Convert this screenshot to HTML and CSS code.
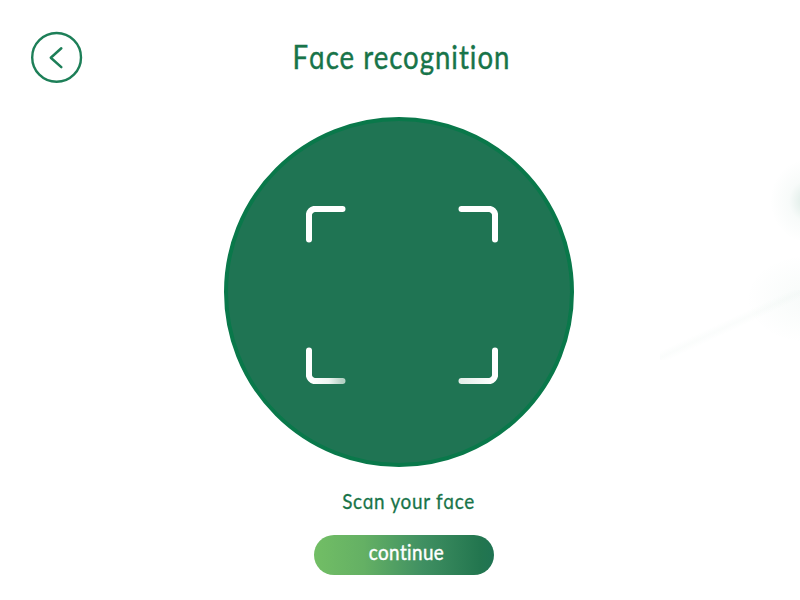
FILE: index.html
```html
<!DOCTYPE html>
<html lang="en">
<head>
<meta charset="utf-8">
<title>Face recognition</title>
<link rel="stylesheet" href="styles.css">
</head>
<body>
<main class="screen">
  <header class="header">
    <button class="back" aria-label="Back">
      <svg viewBox="0 0 52 52" width="52" height="52" fill="none" stroke="#1d7f58">
        <circle cx="25.6" cy="26.4" r="24.4" stroke-width="2.4"/>
        <path d="M30.3 17.3L19.8 26.7L30.3 36.1" stroke-width="2.5" stroke-linecap="round" stroke-linejoin="round"/>
      </svg>
    </button>
    <h1 class="title">F<span class="round-a">a</span>ce recognition</h1>
  </header>
  <section class="scanner">
    <svg viewBox="0 0 192 178" width="192" height="178" fill="none" stroke="#fff" stroke-width="6" stroke-linecap="round" stroke-linejoin="round">
      <defs>
        <linearGradient id="left" gradientUnits="userSpaceOnUse" x1="3" y1="0" x2="36" y2="0"><stop offset="0" stop-color="#fff"/><stop offset=".6" stop-color="#eef5f1"/><stop offset="1" stop-color="#b5d1c4"/></linearGradient>
        <linearGradient id="right" gradientUnits="userSpaceOnUse" x1="156" y1="0" x2="189" y2="0"><stop offset="0" stop-color="#e4eee9"/><stop offset="1" stop-color="#fff"/></linearGradient>
      </defs>
      <path d="M3 33.5V8Q4 4 8 3H36.5"/>
      <path d="M155.5 3H184Q188 4 189 8V33.5"/>
      <path d="M3 144.5V170Q4 174 8 175H36.5" stroke="url(#left)"/>
      <path d="M155.5 175H184Q188 174 189 170V144.5" stroke="url(#right)"/>
    </svg>
  </section>
  <p class="hint">Sc<span class="round-a">a</span>n your f<span class="round-a">a</span>ce</p>
  <button class="continue"><span class="label">continue</span></button>
</main>
</body>
</html>
```

FILE: styles.css
```css
* { box-sizing: border-box; }
body { margin: 0; background: #fff; }
button { font: inherit; border: 0; padding: 0; background: none; }
.screen {
  height: 600px;
  overflow: hidden;
  display: flex;
  flex-direction: column;
  font-family: Lato, sans-serif;
  color: #187449;
  background:
    radial-gradient(ellipse 38px 42px at 808px 201px, rgba(29, 127, 88, .17), rgba(29, 127, 88, .03) 50%, transparent),
    radial-gradient(ellipse 65px 45px at 810px 299px, rgba(29, 127, 88, .035), transparent),
    linear-gradient(155deg, transparent 45%, rgba(29, 127, 88, .018) 50%, transparent 55%) 100% 290px / 140px 70px no-repeat,
    #fff;
}
.header { display: grid; grid-template-columns: 52px 1fr 52px; align-items: start; padding: 31px 31px 0; height: 117px; }
.back { width: 52px; height: 52px; }
.back svg { display: block; }
.title { margin: 5px 0 0 3px; font-size: 33px; line-height: 40px; font-weight: 400; text-align: center; white-space: nowrap; letter-spacing: 1.2px; -webkit-text-stroke: .45px; transform: scaleX(.835); }
.round-a { font-family: Inter, sans-serif; font-feature-settings: "cv11"; font-size: .92em; line-height: 1; }
.scanner { width: 350px; height: 350px; margin-left: 224px; padding: 85px 0 0 78px; border: 4px solid #09784a; border-radius: 50%; background: #1f7453; }
.scanner svg { display: block; }
.hint { margin: 20px 0 0 17px; font-size: 22px; line-height: 28px; text-align: center; letter-spacing: .8px; -webkit-text-stroke: .3px; transform: scaleX(.86); }
.continue { width: 180px; height: 40px; margin: 20px 0 0 314px; border-radius: 20px; background: linear-gradient(90deg, #72be65, #64b064 28%, #409062 60%, #23764f 92%, #1f7352); color: #fff; font-size: 22px; line-height: 28px; }
.label { display: block; margin: -6px 0 0 5px; letter-spacing: .5px; -webkit-text-stroke: .45px; transform: scaleX(.855); }
```
